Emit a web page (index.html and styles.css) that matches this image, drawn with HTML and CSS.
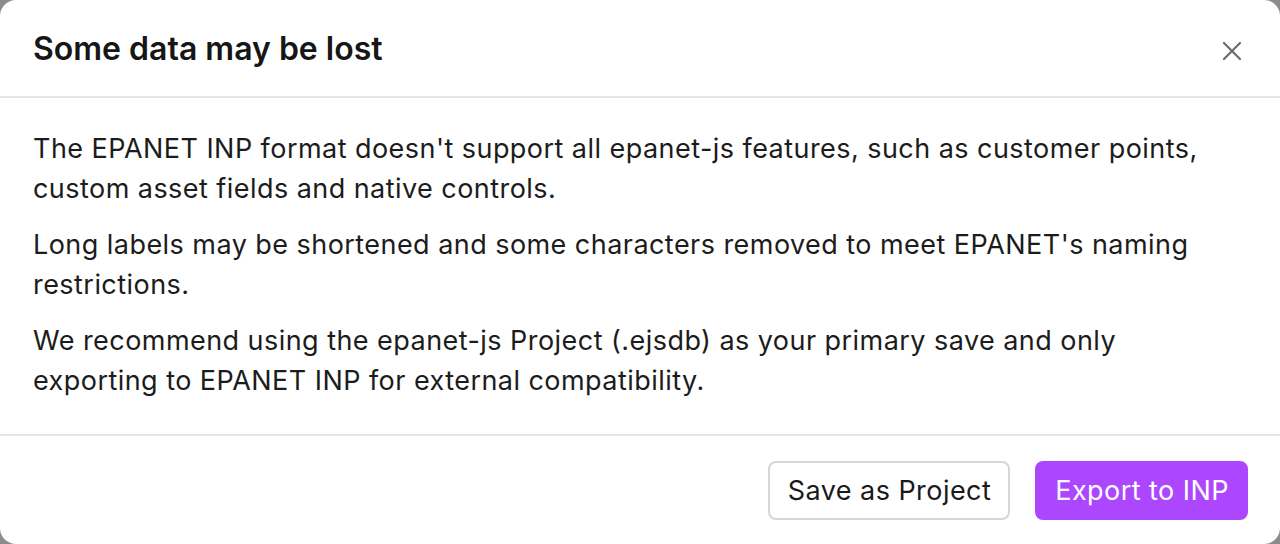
FILE: index.html
```html
<!DOCTYPE html>
<html lang="en">
<head>
<meta charset="utf-8">
<title>Some data may be lost</title>
<link rel="stylesheet" href="styles.css">
</head>
<body>
  <div class="dialog" role="dialog" aria-labelledby="dlg-title">
    <header class="dialog-header">
      <h2 id="dlg-title" class="dialog-title">Some data may be lost</h2>
      <button class="close-btn" aria-label="Close">
        <svg viewBox="0 0 20 20" width="20" height="20" aria-hidden="true">
          <path d="M2 2 L18 18 M18 2 L2 18" stroke="currentColor" stroke-width="2.2" stroke-linecap="round" fill="none"/>
        </svg>
      </button>
    </header>
    <div class="dialog-body">
      <p>The EPANET INP format doesn't support all epanet-js features, such as customer points, custom asset fields and native controls.</p>
      <p>Long labels may be shortened and some characters removed to meet EPANET's naming restrictions.</p>
      <p>We recommend using the epanet-js Project (.ejsdb) as your primary save and only exporting to EPANET INP for external compatibility.</p>
    </div>
    <footer class="dialog-footer">
      <button class="btn btn-secondary">Save as Project</button>
      <button class="btn btn-primary">Export to INP</button>
    </footer>
  </div>
</body>
</html>
```
FILE: styles.css
```css
* {
  box-sizing: border-box;
}

html, body {
  margin: 0;
  height: 100%;
}

body {
  background: #8c8c8c;
  font-family: Inter, "Noto Sans", sans-serif;
  color: #1a1a1a;
}

.dialog {
  height: 544px;
  width: 1280px;
  background: #fff;
  border-radius: 16px;
  display: flex;
  flex-direction: column;
  overflow: hidden;
}

.dialog-header {
  height: 98px;
  flex: none;
  border-bottom: 2px solid #e6e6e6;
  display: flex;
  align-items: center;
  justify-content: space-between;
  padding: 0 38px 0 33px;
}

.dialog-title {
  margin: 0;
  font-size: 32px;
  font-weight: 600;
  letter-spacing: 0;
  color: #161616;
}

.close-btn {
  border: 0;
  background: none;
  padding: 0;
  margin-top: 6px;
  color: #6b6b6b;
  display: flex;
  cursor: pointer;
}

.dialog-body {
  flex: none;
  padding: 31px 33px 33px;
  border-bottom: 2px solid #e6e6e6;
  display: flex;
  flex-direction: column;
  gap: 16px;
}

.dialog-body p {
  margin: 0;
  font-size: 27px;
  line-height: 40px;
  letter-spacing: 0.45px;
  color: #1c1c1c;
}

.dialog-footer {
  flex: 1;
  display: flex;
  justify-content: flex-end;
  align-items: center;
  gap: 25px;
  padding: 0 32px;
}

.btn {
  font-family: inherit;
  font-size: 27px;
  letter-spacing: 0.45px;
  height: 59px;
  padding: 0 17px 0 18px;
  border-radius: 8px;
  cursor: pointer;
}

.btn-secondary {
  background: #fff;
  border: 2px solid #d6d6d6;
  color: #1a1a1a;
}

.btn-primary {
  background: #ad46ff;
  border: 2px solid #ad46ff;
  color: #fff;
}
```
